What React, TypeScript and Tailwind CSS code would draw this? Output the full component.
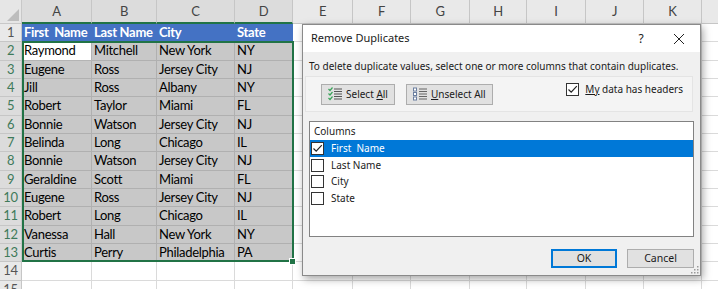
import React from "react";

const colW = ["22px", "70px", "65px", "78px", "58px", "60px", "58px", "59px", "57px", "59px", "58px", "58px", "16px"];
const letters = ["A", "B", "C", "D", "E", "F", "G", "H", "I", "J", "K"];

const data: string[][] = [
  ["Raymond", "Mitchell", "New York", "NY"],
  ["Eugene", "Ross", "Jersey City", "NJ"],
  ["Jill", "Ross", "Albany", "NY"],
  ["Robert", "Taylor", "Miami", "FL"],
  ["Bonnie", "Watson", "Jersey City", "NJ"],
  ["Belinda", "Long", "Chicago", "IL"],
  ["Bonnie", "Watson", "Jersey City", "NJ"],
  ["Geraldine", "Scott", "Miami", "FL"],
  ["Eugene", "Ross", "Jersey City", "NJ"],
  ["Robert", "Long", "Chicago", "IL"],
  ["Vanessa", "Hall", "New York", "NY"],
  ["Curtis", "Perry", "Philadelphia", "PA"],
];

const headers = ["First  Name", "Last Name", "City", "State"];

function Sheet() {
  const cells: React.ReactNode[] = [];
  cells.push(
    <div key="corner" className="relative bg-[#e6e6e6] border-r border-b border-[#c8c8c8]">
      <div className="absolute right-[2px] bottom-[2px] w-0 h-0 border-l-[12px] border-l-transparent border-b-[12px] border-b-[#bdbdbd]" />
    </div>
  );
  letters.forEach((l, i) => {
    const sel = i < 4;
    cells.push(
      <div
        key={"h" + l}
        className={
          sel
            ? "flex items-center justify-center bg-[#dcdcdc] text-[#444] border-r border-[#c6c6c6] border-b-2 border-b-[#217346]"
            : "flex items-center justify-center bg-[#e9e9e9] text-[#444] border-r border-b border-[#c6c6c6]"
        }
      >
        {l}
      </div>
    );
  });
  cells.push(<div key="hx" className="bg-[#e9e9e9] border-b border-[#c6c6c6]" />);

  for (let r = 1; r <= 15; r++) {
    const selRow = r >= 2 && r <= 13;
    cells.push(
      <div
        key={"r" + r}
        className={
          selRow
            ? "flex items-center justify-center bg-[#dcdcdc] text-[#3f7a5a] border-r border-b border-[#c6c6c6]"
            : "flex items-center justify-center bg-[#e9e9e9] text-[#555] border-r border-b border-[#c6c6c6]"
        }
      >
        {r}
      </div>
    );
    for (let c = 0; c < 11; c++) {
      let cls = "bg-white border-r border-b border-[#dadada]";
      let text = "";
      if (r === 1 && c < 4) {
        cls = "bg-[#4472c4] text-white font-bold border-b border-r border-[#4472c4]";
        text = headers[c];
      } else if (selRow && c < 4) {
        text = data[r - 2][c];
        cls =
          r === 2 && c === 0
            ? "bg-white text-black border-r border-b border-[#b4b4b4]"
            : "bg-[#c8c8c8] text-black border-r border-b border-[#b0b0b0]";
      }
      cells.push(
        <div key={r + "-" + c} className={cls + " flex items-center pl-[2px] overflow-hidden whitespace-pre"}>
          {text}
        </div>
      );
    }
    cells.push(<div key={"x" + r} className="bg-white border-b border-[#dadada]" />);
  }

  return (
    <div
      className="relative grid text-[13px] leading-none tracking-[-0.3px]"
      style={{
        gridTemplateColumns: colW.join(" "),
        gridTemplateRows: "24px repeat(15, 18.33px)",
        fontFamily: "Lato, 'Liberation Sans', sans-serif",
      }}
    >
      {cells}
      <div className="absolute left-[22px] top-[41px] w-[272px] h-[221px] border-2 border-[#217346] pointer-events-none" />
      <div className="absolute left-[289px] top-[258px] w-[7px] h-[7px] bg-[#217346] border border-white" />
    </div>
  );
}

function SelectAllIcon() {
  return (
    <svg width="14" height="14" viewBox="0 0 14 14">
      {[1, 5.5, 10].map((y, i) => (
        <path key={i} d={`M0.5 ${y + 1} L2 ${y + 2.5} L4.5 ${y - 0.5}`} stroke="#3aa35a" strokeWidth="1.2" fill="none" />
      ))}
      {[2, 4.5, 7, 9.5, 12].map((y, i) => (
        <rect key={i} x="6" y={y - 0.5} width="8" height="1" fill="#555" />
      ))}
    </svg>
  );
}

function UnselectAllIcon() {
  return (
    <svg width="14" height="14" viewBox="0 0 14 14">
      {[1, 5.5, 10].map((y, i) => (
        <rect key={i} x="0.5" y={y} width="3" height="3" stroke="#6b7fa0" strokeWidth="1" fill="white" />
      ))}
      {[2, 4.5, 7, 9.5, 12].map((y, i) => (
        <rect key={i} x="6" y={y - 0.5} width="8" height="1" fill="#666" />
      ))}
    </svg>
  );
}

function Check({ checked }: { checked: boolean }) {
  return (
    <div className="w-[13px] h-[13px] border border-[#333] bg-white flex items-center justify-center shrink-0">
      {checked && (
        <svg width="11" height="11" viewBox="0 0 11 11">
          <path d="M1.5 5.5 L4.2 8.2 L9.8 2.2" stroke="#222" strokeWidth="1.2" fill="none" />
        </svg>
      )}
    </div>
  );
}

function Dialog() {
  return (
    <div
      className="absolute left-[302px] top-[24px] w-[399px] h-[252px] bg-[#f0f0f0] border border-[#8a8a8a] shadow-[2px_3px_8px_rgba(0,0,0,0.35)] flex flex-col text-[#1a1a1a]"
      style={{ fontFamily: "'Noto Sans', 'Open Sans', sans-serif" }}
    >
      <div className="h-[27px] bg-white flex items-center pl-[8px] text-[11px] shrink-0">
        <span className="flex-1">Remove Duplicates</span>
        <span className="w-[20px] text-center text-[12px] mr-[22px]">?</span>
        <svg width="12" height="12" viewBox="0 0 12 12" className="mr-[15px]">
          <path d="M1 1 L11 11 M11 1 L1 11" stroke="#222" strokeWidth="1" />
        </svg>
      </div>
      <div className="pl-[6px] pt-[7px] text-[10px] leading-[14px] whitespace-nowrap">
        To delete duplicate values, select one or more columns that contain duplicates.
      </div>
      <div className="mt-[3px] ml-[2px] mr-[7px] h-[36px] bg-[#f4f4f4] border border-[#e4e4e4] flex items-center pl-[15px] pr-[9px] gap-[11px] text-[10px]">
        <div className="h-[21px] w-[74px] bg-[#e1e1e1] border border-[#adadad] flex items-center pl-[6px] gap-[4px]">
          <SelectAllIcon />
          <span>
            Select <span className="underline">A</span>ll
          </span>
        </div>
        <div className="h-[21px] w-[87px] bg-[#e1e1e1] border border-[#adadad] flex items-center pl-[6px] gap-[4px]">
          <UnselectAllIcon />
          <span>
            <span className="underline">U</span>nselect All
          </span>
        </div>
        <div className="flex-1" />
        <div className="flex items-center gap-[6px] -mt-[10px]">
          <Check checked />
          <span>
            <span className="underline">My</span> data has headers
          </span>
        </div>
      </div>
      <div className="mt-[9px] ml-[6px] mr-[6px] h-[116px] bg-white border border-[#828282] text-[10px] flex flex-col">
        <div className="h-[18px] pl-[4px] flex items-center">Columns</div>
        {["First  Name", "Last Name", "City", "State"].map((n, i) => (
          <div
            key={n}
            className={
              i === 0
                ? "h-[17px] bg-[#0078d7] text-white flex items-center pl-[1px] gap-[7px] whitespace-pre"
                : "h-[16.5px] flex items-center pl-[1px] gap-[7px] whitespace-pre"
            }
          >
            <Check checked={i === 0} />
            <span>{n}</span>
          </div>
        ))}
      </div>
      <div className="flex-1" />
      <div className="flex justify-end gap-[10px] mr-[6px] mb-[7px] text-[10.5px]">
        <div className="w-[66px] h-[19px] bg-[#e1e1e1] border-2 border-[#0078d7] flex items-center justify-center">OK</div>
        <div className="w-[67px] h-[19px] bg-[#e1e1e1] border border-[#adadad] flex items-center justify-center">Cancel</div>
      </div>
      <svg className="absolute right-[1px] bottom-[1px]" width="8" height="8" viewBox="0 0 8 8">
        {[
          [6, 0],
          [3, 3],
          [6, 3],
          [0, 6],
          [3, 6],
          [6, 6],
        ].map(([x, y], i) => (
          <rect key={i} x={x} y={y} width="1.5" height="1.5" fill="#9a9a9a" />
        ))}
      </svg>
    </div>
  );
}

export default function App() {
  return (
    <div className="relative w-[718px] h-[289px] overflow-hidden bg-white">
      <Sheet />
      <Dialog />
    </div>
  );
}
